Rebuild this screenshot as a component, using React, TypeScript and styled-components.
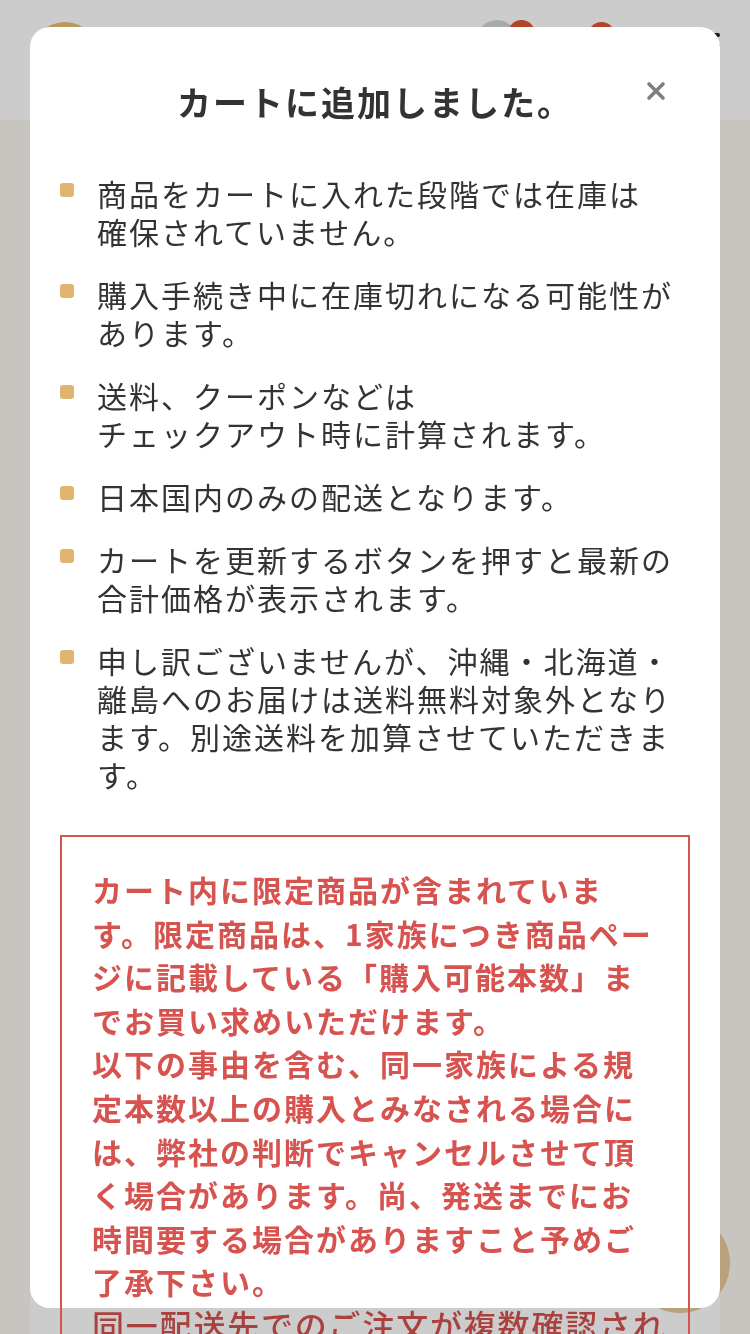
import React from 'react';
import styled, { createGlobalStyle } from 'styled-components';

const GlobalStyle = createGlobalStyle`
  html, body {
    margin: 0;
    padding: 0;
    background: #fbf7f2;
    font-family: "Noto Sans CJK JP", "Noto Sans", sans-serif;
  }
  * {
    box-sizing: border-box;
  }
`;

const Page = styled.div`
  min-height: 1334px;
  display: flex;
  flex-direction: column;
  background: #fbf7f2;
`;

const Header = styled.header`
  height: 120px;
  background: #fff;
  display: flex;
  align-items: flex-start;
  padding: 22px 30px 0 30px;
`;

const Logo = styled.div`
  width: 70px;
  height: 70px;
  border-radius: 50%;
  background: #e6bf72;
`;

const HeaderRight = styled.div`
  margin-left: auto;
  display: flex;
  align-items: flex-start;
  gap: 0;
`;

const Avatar = styled.div`
  position: relative;
  width: 40px;
  height: 40px;
  margin-top: -2px;
  border-radius: 50%;
  background: #d4d4d4;
`;

const CartIcon = styled.div`
  position: relative;
  width: 36px;
  height: 36px;
  margin-left: 71px;
`;

const Badge = styled.span<{ $left: number }>`
  position: absolute;
  top: 0;
  left: ${({ $left }) => $left}px;
  width: 27px;
  height: 27px;
  border-radius: 50%;
  background: #dc5734;
`;

const MenuIcon = styled.div`
  width: 28px;
  height: 30px;
  margin-left: 68px;
  margin-top: 11px;
  display: flex;
  flex-direction: column;
  gap: 7px;
  &::before, &::after {
    content: '';
    height: 4px;
    background: #222;
    border-radius: 2px;
  }
`;

const Content = styled.main`
  flex: 1;
  display: flex;
  flex-direction: column;
  padding: 180px 30px 0;
`;

const Panel = styled.section`
  flex: 1;
  background: #fff;
`;

const Fab = styled.div`
  position: fixed;
  left: 630px;
  top: 1213px;
  width: 100px;
  height: 100px;
  border-radius: 50%;
  background: #e7ca9b;
`;

const Overlay = styled.div`
  position: fixed;
  inset: 0;
  background: rgba(0, 0, 0, 0.2);
  z-index: 5;
`;

const Modal = styled.div`
  position: fixed;
  top: 27px;
  left: 30px;
  width: 690px;
  height: 1281px;
  background: #fff;
  border-radius: 20px;
  padding: 51px 30px 0;
  overflow: visible;
  z-index: 10;
`;

const TitleRow = styled.div`
  position: relative;
`;

const Title = styled.h2`
  margin: 0;
  text-align: center;
  font-size: 34px;
  font-weight: 700;
  line-height: 48px;
  letter-spacing: 2px;
  color: #333;
`;

const CloseButton = styled.button`
  position: absolute;
  top: -7px;
  right: 14px;
  width: 40px;
  height: 40px;
  padding: 0;
  border: 0;
  background: transparent;
  display: flex;
  align-items: center;
  justify-content: center;
  cursor: pointer;
`;

const List = styled.ul`
  list-style: none;
  margin: 48px 0 0;
  padding: 0;
  display: flex;
  flex-direction: column;
  gap: 25px;
`;

const Item = styled.li`
  display: flex;
  align-items: flex-start;
  gap: 23px;
`;

const Bullet = styled.span`
  flex-shrink: 0;
  width: 14px;
  height: 14px;
  margin-top: 9px;
  border-radius: 3px;
  background: #dfb56f;
`;

const ItemText = styled.p`
  margin: 0;
  font-size: 30px;
  line-height: 38px;
  letter-spacing: 2px;
  color: #333;
  white-space: nowrap;
`;

const Notice = styled.div`
  margin-top: 42px;
  border: 2px solid #d65350;
  border-bottom: 0;
  padding: 31px 30px 0;
  height: 520px;
`;

const NoticeText = styled.p`
  margin: 0;
  font-size: 30px;
  font-weight: 700;
  line-height: 43.6px;
  letter-spacing: 2px;
  color: #d65350;
  white-space: nowrap;
`;

const NoticeTail = styled.p`
  margin: 0;
  font-size: 32px;
  font-weight: 500;
  line-height: 40px;
  letter-spacing: 1.8px;
  color: #a9423f;
  white-space: nowrap;
`;

const items: string[][] = [
  ['商品をカートに入れた段階では在庫は', '確保されていません。'],
  ['購入手続き中に在庫切れになる可能性が', 'あります。'],
  ['送料、クーポンなどは', 'チェックアウト時に計算されます。'],
  ['日本国内のみの配送となります。'],
  ['カートを更新するボタンを押すと最新の', '合計価格が表示されます。'],
  ['申し訳ございませんが、沖縄・北海道・', '離島へのお届けは送料無料対象外となり', 'ます。別途送料を加算させていただきま', 'す。'],
];

const notice: string[] = [
  'カート内に限定商品が含まれていま',
  'す。限定商品は、1家族につき商品ペー',
  'ジに記載している「購入可能本数」ま',
  'でお買い求めいただけます。',
  '以下の事由を含む、同一家族による規',
  '定本数以上の購入とみなされる場合に',
  'は、弊社の判断でキャンセルさせて頂',
  'く場合があります。尚、発送までにお',
  '時間要する場合がありますこと予めご',
  '了承下さい。',
];

const withBreaks = (lines: string[]) =>
  lines.map((line, i) => (
    <React.Fragment key={i}>
      {line}
      {i < lines.length - 1 && <br />}
    </React.Fragment>
  ));

export default function App() {
  return (
    <>
      <GlobalStyle />
      <Page>
        <Header>
          <Logo />
          <HeaderRight>
            <Avatar>
              <Badge $left={31} />
            </Avatar>
            <CartIcon>
              <Badge $left={0} />
            </CartIcon>
            <MenuIcon />
          </HeaderRight>
        </Header>
        <Content>
          <Panel />
        </Content>
      </Page>
      <Fab />
      <Overlay />
      <Modal role="dialog">
        <TitleRow>
          <Title>カートに追加しました。</Title>
          <CloseButton aria-label="閉じる">
            <svg width="20" height="20" viewBox="0 0 20 20">
              <path d="M3 3 L17 17 M17 3 L3 17" stroke="#7f7f7f" strokeWidth="3.6" strokeLinecap="round" fill="none" />
            </svg>
          </CloseButton>
        </TitleRow>
        <List>
          {items.map((lines, i) => (
            <Item key={i}>
              <Bullet />
              <ItemText>{withBreaks(lines)}</ItemText>
            </Item>
          ))}
        </List>
        <Notice>
          <NoticeText>{withBreaks(notice)}</NoticeText>
          <NoticeTail>同一配送先でのご注文が複数確認され</NoticeTail>
        </Notice>
      </Modal>
    </>
  );
}
